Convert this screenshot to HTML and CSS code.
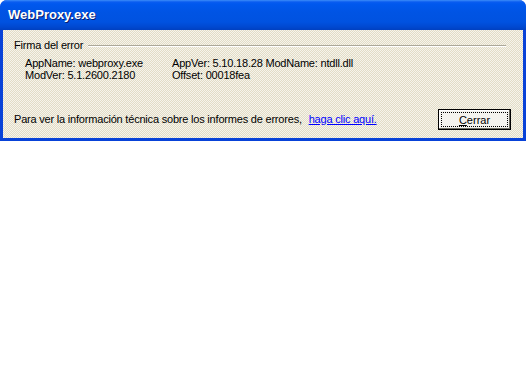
FILE: index.html
```html
<!DOCTYPE html>
<html lang="es">
<head>
    <meta charset="UTF-8">
    <title>WebProxy.exe</title>
    <link rel="stylesheet" href="styles.css">
</head>
<body>
    <div class="window">
        <div class="titlebar">
            <span class="title">WebProxy.exe</span>
        </div>
        <div class="content">
            <div class="group">
                <span class="group-label">Firma del error</span>
                <span class="group-line"></span>
            </div>
            <div class="signature">
                <div class="col">
                    <div>AppName: webproxy.exe</div>
                    <div>ModVer: 5.1.2600.2180</div>
                </div>
                <div class="col">
                    <div>AppVer: 5.10.18.28 ModName: ntdll.dll</div>
                    <div>Offset: 00018fea</div>
                </div>
            </div>
            <div class="footer">
                <p>Para ver la información técnica sobre los informes de errores, <a href="#">haga clic aquí.</a></p>
                <button class="btn"><span class="focus"><u>C</u>errar</span></button>
            </div>
        </div>
    </div>
</body>
</html>
```

FILE: styles.css
```css
body {
    margin: 0;
    background: #fff;
    font-family: Tahoma, "DejaVu Sans", sans-serif;
}

.window {
    width: 526px;
    height: 141px;
    box-sizing: border-box;
    background: #0842d8;
    border-radius: 7px 7px 0 0;
    padding: 0 3px 3px 3px;
    display: flex;
    flex-direction: column;
}

.titlebar {
    height: 30px;
    margin: 0 -3px;
    border-radius: 7px 7px 0 0;
    background: linear-gradient(to bottom, #3c8cf8 0, #0a5cf0 2px, #0058ee 4px, #0054e4 12px, #0052e0 22px, #0048d0 27px, #0040c0 30px);
    display: flex;
    align-items: center;
    padding-left: 8px;
}

.title {
    color: #fff;
    font-family: "Liberation Sans", Arial, sans-serif;
    font-weight: bold;
    font-size: 13px;
    text-shadow: 1px 1px 0 #0a1e6e;
    margin-top: -1px;
}

.content {
    flex: 1;
    background-color: #ece9d8;
    background-image: repeating-conic-gradient(#f6f4ec 0 25%, #e2dcc6 0 50%);
    background-size: 2px 2px;
    font-family: "Liberation Sans", Arial, sans-serif;
    font-size: 11px;
    letter-spacing: -0.2px;
    color: #000;
    padding: 9px 0 0 11px;
    display: flex;
    flex-direction: column;
}

.group {
    display: flex;
    align-items: center;
    gap: 5px;
    padding-right: 17px;
}

.group-line {
    flex: 1;
    height: 1px;
    background: #aca899;
    border-bottom: 1px solid #fff;
    margin-top: 1px;
}

.signature {
    display: flex;
    padding: 6px 0 0 11px;
    line-height: 12px;
}

.signature .col:first-child {
    width: 147px;
}

.footer {
    display: flex;
    align-items: center;
    justify-content: space-between;
    margin-top: 26px;
    padding-right: 12px;
}

.footer p {
    margin: 0;
}

.footer a {
    color: #0000ff;
    margin-left: 4px;
}

.btn {
    width: 73px;
    height: 21px;
    padding: 2px;
    background: #f4f3ee;
    border: 1px solid #000;
    box-shadow: inset -1px -1px 0 #716f64, inset 1px 1px 0 #fff;
    font-family: "Liberation Sans", Arial, sans-serif;
    font-size: 11px;
    color: #000;
    display: flex;
    margin-top: 2px;
}

.focus {
    flex: 1;
    border: 1px dotted #000;
    display: flex;
    align-items: center;
    justify-content: center;
}
```
